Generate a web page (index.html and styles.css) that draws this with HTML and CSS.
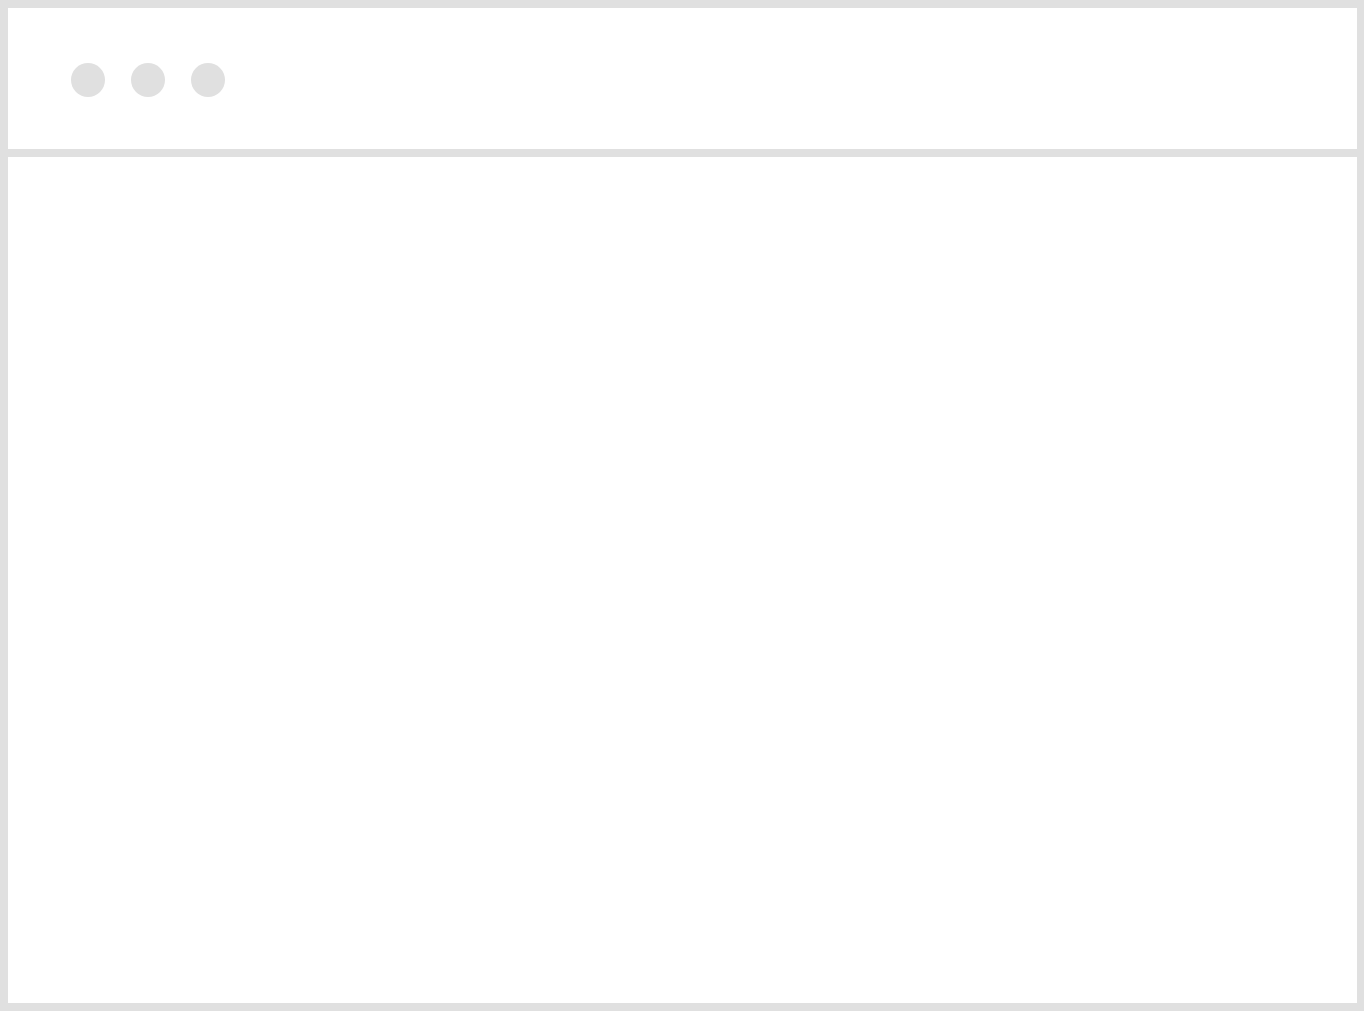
FILE: index.html
```html
<!DOCTYPE html>
<html>
<head>
<meta charset="utf-8">
<title>Window sketch</title>
<link rel="stylesheet" href="styles.css">
</head>
<body>
<div class="window">
  <div class="titlebar">
    <span class="dot"></span>
    <span class="dot"></span>
    <span class="dot"></span>
  </div>
  <div class="content"></div>
</div>
</body>
</html>
```
FILE: styles.css
```css
html, body {
  margin: 0;
  padding: 0;
  background: #ffffff;
  font-family: "Liberation Sans", Arial, sans-serif;
}
.window {
  box-sizing: border-box;
  width: 1364px;
  height: 1011px;
  border-top: 8px solid #e0e0e0;
  border-left: 8px solid #e0e0e0;
  border-bottom: 8px solid #e0e0e0;
  border-right: 7px solid #e0e0e0;
  display: flex;
  flex-direction: column;
  background: #ffffff;
}
.titlebar {
  box-sizing: border-box;
  height: 149px;
  border-bottom: 8px solid #e0e0e0;
  padding: 55px 0 0 63px;
  display: flex;
  align-items: flex-start;
  gap: 26px;
}
.dot {
  width: 34px;
  height: 34px;
  border-radius: 50%;
  background: #e0e0e0;
}
.content {
  flex: 1;
}
```
